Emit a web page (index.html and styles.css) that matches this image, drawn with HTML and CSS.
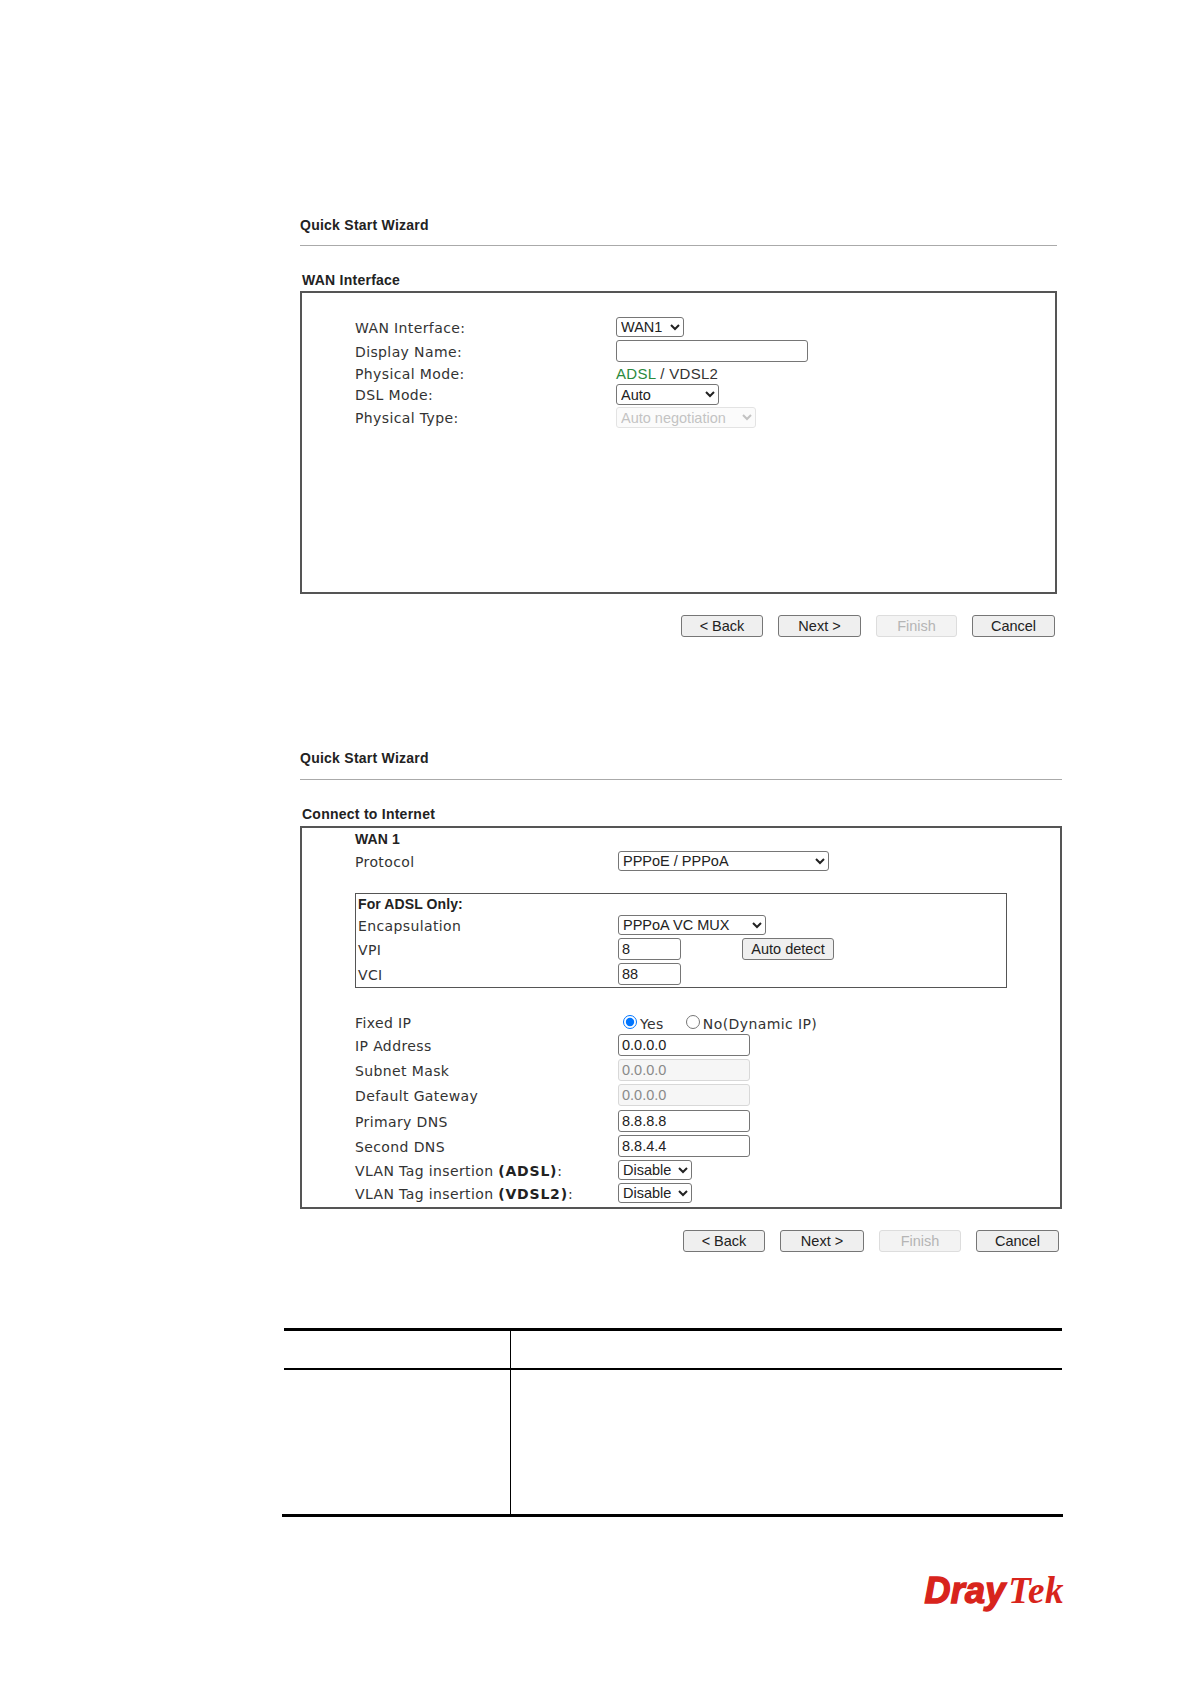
FILE: index.html
```html
<!DOCTYPE html>
<html lang="en">
<head>
<meta charset="utf-8">
<title>Quick Start Wizard</title>
<link rel="stylesheet" href="styles.css">
</head>
<body>
<main class="page">
  <section class="wizard wizard-wan">
    <h2 class="wiz-title">Quick Start Wizard</h2>
    <hr class="wiz-rule">
    <h3 class="box-title">WAN Interface</h3>
    <div class="box box-wan">
      <div class="row h20"><span class="lab">WAN Interface:</span><select class="ctl w68"><option>WAN1</option></select></div>
      <div class="row h22 mt3"><span class="lab">Display Name:</span><input class="ctl w192" type="text"></div>
      <div class="row h22"><span class="lab">Physical Mode:</span><span class="val"><span class="green">ADSL</span> / VDSL2</span></div>
      <div class="row h21"><span class="lab">DSL Mode:</span><select class="ctl w103"><option>Auto</option></select></div>
      <div class="row h21 mt2"><span class="lab">Physical Type:</span><select class="ctl w140" disabled><option>Auto negotiation</option></select></div>
    </div>
    <div class="actions">
      <button class="btn w82" type="button">&lt; Back</button>
      <button class="btn w83" type="button">Next &gt;</button>
      <button class="btn w81" type="button" disabled>Finish</button>
      <button class="btn w83" type="button">Cancel</button>
    </div>
  </section>

  <section class="wizard wizard-net">
    <h2 class="wiz-title">Quick Start Wizard</h2>
    <hr class="wiz-rule">
    <h3 class="box-title">Connect to Internet</h3>
    <div class="box box-net">
      <div class="row h22"><strong class="lab lab-b">WAN 1</strong></div>
      <div class="row h20 mt1"><span class="lab lab2">Protocol</span><select class="ctl w211"><option>PPPoE / PPPoA</option></select></div>
      <div class="inner">
        <div class="row h19"><strong class="lab lab-i lab-b">For ADSL Only:</strong></div>
        <div class="row h20 mt2"><span class="lab lab-i">Encapsulation</span><select class="ctl w148"><option>PPPoA VC MUX</option></select></div>
        <div class="row h22 mt3"><span class="lab lab-i">VPI</span><input class="ctl w63" type="text" value="8"><button class="btn w92 detect" type="button">Auto detect</button></div>
        <div class="row h22 mt3"><span class="lab lab-i">VCI</span><input class="ctl w63" type="text" value="88"></div>
      </div>
      <div class="row h16 fixed">
        <span class="lab lab2">Fixed IP</span>
        <label class="radio"><input type="radio" name="fixed" checked><span>Yes</span></label>
        <label class="radio radio-no"><input type="radio" name="fixed"><span>No(Dynamic IP)</span></label>
      </div>
      <div class="row h22 mt4"><span class="lab lab2">IP Address</span><input class="ctl w132" type="text" value="0.0.0.0"></div>
      <div class="row h22 mt3"><span class="lab lab2">Subnet Mask</span><input class="ctl w132" type="text" value="0.0.0.0" disabled></div>
      <div class="row h22 mt3"><span class="lab lab2">Default Gateway</span><input class="ctl w132" type="text" value="0.0.0.0" disabled></div>
      <div class="row h22 mt4"><span class="lab lab2">Primary DNS</span><input class="ctl w132" type="text" value="8.8.8.8"></div>
      <div class="row h22 mt3"><span class="lab lab2">Second DNS</span><input class="ctl w132" type="text" value="8.8.4.4"></div>
      <div class="row h20 mt3"><span class="lab lab2">VLAN Tag insertion <b class="strong">(ADSL)</b>:</span><select class="ctl w74"><option>Disable</option></select></div>
      <div class="row h20 mt3"><span class="lab lab2">VLAN Tag insertion <b class="strong">(VDSL2)</b>:</span><select class="ctl w74"><option>Disable</option></select></div>
    </div>
    <div class="actions">
      <button class="btn w82" type="button">&lt; Back</button>
      <button class="btn w84" type="button">Next &gt;</button>
      <button class="btn w82" type="button" disabled>Finish</button>
      <button class="btn w83" type="button">Cancel</button>
    </div>
  </section>

  <div class="spec">
    <div class="spec-row spec-head"><div class="spec-l"></div><div class="spec-r"></div></div>
    <div class="spec-row spec-body"><div class="spec-l"></div><div class="spec-r"></div></div>
  </div>

  <footer class="brand"><span class="brand-a">Dray</span><span class="brand-b">Tek</span></footer>
</main>
</body>
</html>
```
FILE: styles.css
```css
* { box-sizing: border-box; }
html, body { margin: 0; padding: 0; background: #fff; }
body { font-family: "Liberation Sans", Arial, sans-serif; color: #222; }
.page { width: 1190px; height: 1684px; padding-top: 217px; overflow: hidden; }

.wizard { margin-left: 300px; }
.wizard-wan { width: 757px; }
.wizard-net { width: 762px; margin-top: 113px; }

.wiz-title { margin: 0; font-size: 14px; line-height: 16px; font-weight: 700; letter-spacing: .25px; color: #222; }
.wiz-rule { margin: 12px 0 0; border: 0; height: 1px; background: #aaa; }
.box-title { margin: 26px 0 0 2px; font-size: 14px; line-height: 16px; font-weight: 700; letter-spacing: .25px; color: #222; }
.wizard-net .wiz-rule { margin-top: 13px; }

.box { margin-top: 3px; border: 2px solid #555; }
.box-wan { height: 303px; padding: 24px 0 0 53px; }
.box-net { height: 383px; margin-top: 4px; padding: 0 0 0 53px; }

.row { display: flex; align-items: center; }
.h16 { height: 16px; } .h19 { height: 19px; } .h20 { height: 20px; } .h21 { height: 21px; } .h22 { height: 22px; }
.mt1 { margin-top: 1px; } .mt2 { margin-top: 2px; } .mt3 { margin-top: 3px; } .mt4 { margin-top: 4px; }

.lab { width: 261px; flex: none; padding-top: 1px; font-family: "DejaVu Sans", Verdana, sans-serif; font-size: 14px; letter-spacing: .38px; color: #333; }
.lab2 { width: 263px; }
.lab-b { font-family: "Liberation Sans", Arial, sans-serif; font-size: 14px; font-weight: 700; letter-spacing: .1px; color: #222; padding-top: 0; }
.lab-i { width: 260px; }
.inner .lab-b { width: auto; }
.strong { font-weight: 700; letter-spacing: .8px; color: #222; }
.val { font-size: 15px; letter-spacing: .3px; color: #333; }
.green { color: #2b8a3e; }

.ctl { height: 100%; padding: 0 3px; border: 1px solid #767676; border-radius: 3px; background: #fff; font-family: "Liberation Sans", Arial, sans-serif; font-size: 14.5px; color: #222; }
select.ctl { padding: 0; }
.ctl:disabled { border-color: #d8d8d8; background: #f6f6f6; color: #8a8a8a; }
select.ctl:disabled { background: #fafafa; color: #aaa; }
.w63 { width: 63px; } .w68 { width: 68px; } .w74 { width: 74px; } .w103 { width: 103px; }
.w132 { width: 132px; } .w140 { width: 140px; } .w148 { width: 148px; } .w192 { width: 192px; } .w211 { width: 211px; }

.inner { width: 652px; height: 95px; margin-top: 22px; padding: 0 0 0 2px; border: 1px solid #555; }
.fixed { margin-top: 26px; }
.radio { display: flex; align-items: center; font-family: "DejaVu Sans", Verdana, sans-serif; font-size: 14px; letter-spacing: .4px; color: #333; }
.radio input { width: 14px; height: 14px; margin: 0 3px 0 5px; }
.radio span { padding-top: 3px; }
.radio-no { margin-left: 17px; }
.radio-no input { margin-left: 5px; }

.actions { display: flex; justify-content: flex-end; gap: 15px; margin-top: 21px; padding-right: 2px; }
.wizard-net .actions { padding-right: 3px; }
.btn { height: 22px; padding: 0; border: 1px solid #767676; border-radius: 3px; background: #efefef; font-family: "Liberation Sans", Arial, sans-serif; font-size: 14.5px; color: #222; }
.btn:disabled { border-color: #ddd; background: #f3f3f3; color: #b5b5b5; }
.w81 { width: 81px; } .w82 { width: 82px; } .w83 { width: 83px; } .w84 { width: 84px; } .w92 { width: 92px; }
.detect { margin-left: 61px; }

.spec { width: 778px; margin: 76px 0 0 284px; border-top: 3px solid #000; }
.spec-row { display: flex; }
.spec-head { height: 39px; border-bottom: 2px solid #000; }
.spec-body { height: 147px; margin: 0 -1px 0 -2px; padding-left: 2px; padding-right: 1px; border-bottom: 3px solid #000; }
.spec-l { width: 226px; flex: none; }
.spec-r { flex: 1; border-left: 1px solid #000; }

.brand { display: flex; justify-content: flex-end; align-items: baseline; margin-top: 54px; padding-right: 126px; line-height: 40px; color: #d8241c; }
.brand-a { font-size: 36px; font-weight: 700; font-style: italic; letter-spacing: .2px; -webkit-text-stroke: 1.4px #d8241c; }
.brand-b { font-family: "Liberation Serif", "Times New Roman", serif; font-size: 37px; font-weight: 700; font-style: italic; letter-spacing: .5px; margin-left: 3px; }
```
